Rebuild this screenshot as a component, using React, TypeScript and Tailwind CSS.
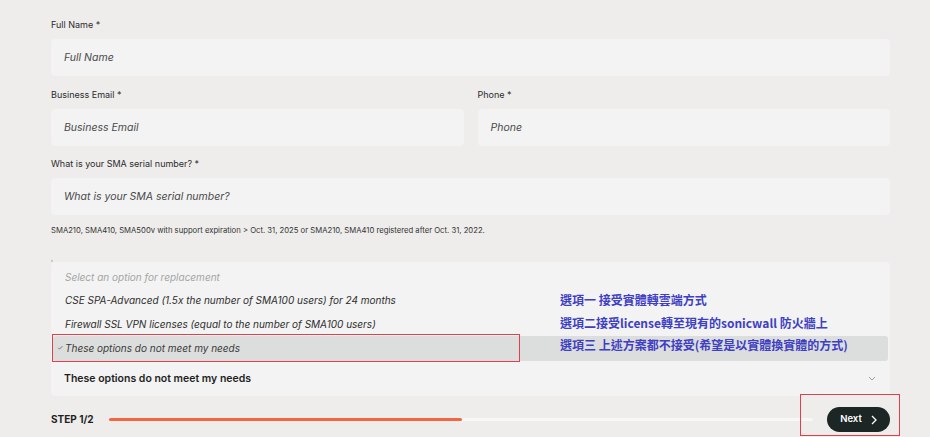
import React from "react";

const inter = { fontFamily: "Inter, 'Noto Sans', sans-serif" };

function Label({ children }: { children: React.ReactNode }) {
  return <div className="h-[12px] text-[9px] leading-[12px] text-[#2b2b2b]">{children}</div>;
}

function Input({ placeholder }: { placeholder: string }) {
  return (
    <div className="h-[37px] rounded-[4px] bg-[#f2f3f2] flex items-center pl-[13px] text-[10.5px] italic text-[#4a4a4a]">
      {placeholder}
    </div>
  );
}

export default function App() {
  return (
    <div className="relative w-[930px] h-[437px] overflow-hidden bg-[#eeedeb]" style={inter}>
      <div className="ml-[51px] w-[839px] pt-[19px] flex flex-col">
        <Label>Full Name *</Label>
        <div className="mt-[8px]"><Input placeholder="Full Name" /></div>
        <div className="mt-[13px] grid grid-cols-2 gap-x-[14px]">
          <div className="flex flex-col">
            <Label>Business Email *</Label>
            <div className="mt-[8px]"><Input placeholder="Business Email" /></div>
          </div>
          <div className="flex flex-col">
            <Label>Phone *</Label>
            <div className="mt-[8px]"><Input placeholder="Phone" /></div>
          </div>
        </div>
        <div className="mt-[12px]"><Label>What is your SMA serial number? *</Label></div>
        <div className="mt-[8px]"><Input placeholder="What is your SMA serial number?" /></div>
        <div className="mt-[11px] text-[7.7px] leading-[10px] text-[#333]">
          SMA210, SMA410, SMA500v with support expiration &gt; Oct. 31, 2025 or SMA210, SMA410 registered after Oct. 31, 2022.
        </div>
        <div className="relative mt-[26px] h-[134px] rounded-[4px] bg-[#f2f3f2] flex flex-col">
          <span className="absolute left-0 top-[-2px] text-[6px] leading-[6px] text-[#555]">'</span>
          <div className="pt-[4px] px-[2px] flex flex-col text-[10px] italic">
            <div className="h-[22px] flex items-center pl-[12px] text-[#a4a6a5]">Select an option for replacement</div>
            <div className="h-[24px] flex items-center pl-[12px] text-[#2e2e2e]">CSE SPA-Advanced (1.5x the number of SMA100 users) for 24 months</div>
            <div className="h-[24px] flex items-center pl-[12px] text-[#2e2e2e]">Firewall SSL VPN licenses (equal to the number of SMA100 users)</div>
            <div className="h-[25px] flex items-center rounded-[3px] bg-[#dcdedd] pl-[4px] text-[#3a3a3a]">
              <span className="w-[8px] text-[7px] not-italic text-[#666]">✓</span>
              These options do not meet my needs
            </div>
          </div>
          <div className="flex-1 flex items-center justify-between pl-[13px] pr-[14px]">
            <span className="text-[10.5px] font-semibold text-[#1f1f1f]">These options do not meet my needs</span>
            <svg width="8" height="5" viewBox="0 0 8 5" fill="none" stroke="#9a9c9b" strokeWidth="1">
              <path d="M1 1l3 3 3-3" />
            </svg>
          </div>
        </div>
        <div className="mt-[11px] h-[25px] flex items-center">
          <span className="w-[58px] text-[10px] font-bold text-[#1f1f1f]">STEP 1/2</span>
          <div className="relative w-[704px] h-[3px] bg-[#f7f7f4] rounded-full">
            <div className="absolute left-0 top-0 h-[3px] w-[353px] bg-[#f26640] rounded-full" />
          </div>
          <div className="ml-auto w-[63px] h-[25px] rounded-full bg-[#1c2624] flex items-center justify-center gap-[9px] text-white text-[9.5px] font-semibold">
            Next
            <svg width="6" height="10" viewBox="0 0 6 10" fill="none" stroke="white" strokeWidth="1.3">
              <path d="M1 1l4 4-4 4" />
            </svg>
          </div>
        </div>
      </div>

      {/* annotations */}
      <div
        className="absolute left-[560px] top-[289px] flex flex-col text-[12px] leading-[22.5px] font-semibold text-[#3f3fc4]"
        style={{ fontFamily: "'Noto Sans CJK TC', 'Noto Sans', sans-serif" }}
      >
        <span>選項一 接受實體轉雲端方式</span>
        <span>選項二接受license轉至現有的sonicwall 防火牆上</span>
        <span>選項三 上述方案都不接受(希望是以實體換實體的方式)</span>
      </div>
      <div className="absolute left-[52px] top-[334px] w-[468px] h-[28px] border border-[#e0404a]" />
      <div className="absolute left-[800px] top-[394px] w-[100px] h-[42px] border border-[#e0404a]" />
    </div>
  );
}
